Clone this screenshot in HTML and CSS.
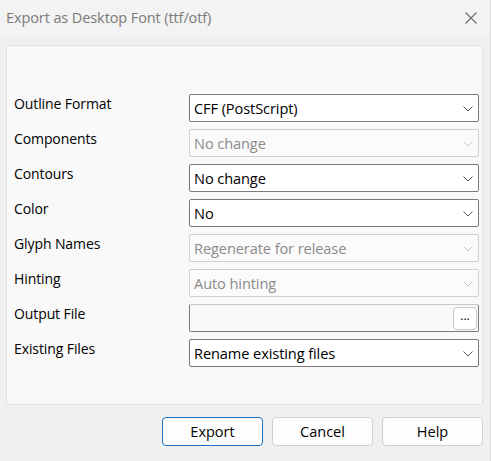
FILE: index.html
```html
<!DOCTYPE html>
<html lang="en">
<head>
    <meta charset="UTF-8">
    <title>Export as Desktop Font (ttf/otf)</title>
    <link rel="stylesheet" href="styles.css">
</head>
<body>
    <div class="window">
        <div class="titlebar">
            <span class="title">Export as Desktop Font (ttf/otf)</span>
            <svg class="close" width="12" height="12" viewBox="0 0 12 12">
                <path d="M0.5 0.5 L11.5 11.5 M11.5 0.5 L0.5 11.5" stroke="#6b6b6b" stroke-width="1.1" fill="none"/>
            </svg>
        </div>

        <div class="content">
            <div class="panel">
                <div class="row">
                    <div class="label">Outline Format</div>
                    <div class="select">CFF (PostScript)<svg class="chev" viewBox="0 0 10 6"><path d="M0.5 0.5 L5 5 L9.5 0.5"/></svg></div>
                </div>
                <div class="row">
                    <div class="label">Components</div>
                    <div class="select disabled">No change<svg class="chev" viewBox="0 0 10 6"><path d="M0.5 0.5 L5 5 L9.5 0.5"/></svg></div>
                </div>
                <div class="row">
                    <div class="label">Contours</div>
                    <div class="select">No change<svg class="chev" viewBox="0 0 10 6"><path d="M0.5 0.5 L5 5 L9.5 0.5"/></svg></div>
                </div>
                <div class="row">
                    <div class="label">Color</div>
                    <div class="select">No<svg class="chev" viewBox="0 0 10 6"><path d="M0.5 0.5 L5 5 L9.5 0.5"/></svg></div>
                </div>
                <div class="row">
                    <div class="label">Glyph Names</div>
                    <div class="select disabled">Regenerate for release<svg class="chev" viewBox="0 0 10 6"><path d="M0.5 0.5 L5 5 L9.5 0.5"/></svg></div>
                </div>
                <div class="row">
                    <div class="label">Hinting</div>
                    <div class="select disabled">Auto hinting<svg class="chev" viewBox="0 0 10 6"><path d="M0.5 0.5 L5 5 L9.5 0.5"/></svg></div>
                </div>
                <div class="row">
                    <div class="label">Output File</div>
                    <div class="file-input">
                        <span class="browse">...</span>
                    </div>
                </div>
                <div class="row">
                    <div class="label">Existing Files</div>
                    <div class="select">Rename existing files<svg class="chev" viewBox="0 0 10 6"><path d="M0.5 0.5 L5 5 L9.5 0.5"/></svg></div>
                </div>
            </div>
        </div>

        <div class="buttons">
            <button class="btn default">Export</button>
            <button class="btn">Cancel</button>
            <button class="btn">Help</button>
        </div>
    </div>
</body>
</html>
```

FILE: styles.css
```css
* {
    margin: 0;
    padding: 0;
    box-sizing: border-box;
    font-family: "Open Sans", "Noto Sans", sans-serif;
}

body {
    background-color: #f0f0f0;
    color: #000;
    width: 491px;
    height: 461px;
    overflow: hidden;
}

.window {
    width: 491px;
    height: 461px;
    border-right: 1px solid #dcdcdc;
}

.titlebar {
    height: 35px;
    background-color: #f3f3f3;
    display: flex;
    align-items: center;
    justify-content: space-between;
    padding: 0 13px 0 6px;
}

.title {
    font-size: 14.5px;
    color: #7a7a7a;
    letter-spacing: -0.1px;
}

.content {
    padding: 10px 7px 0 6px;
}

.panel {
    height: 360px;
    background-color: #f9f9f9;
    border: 1px solid #e2e2e2;
    padding: 48px 3px 0 7px;
    display: flex;
    flex-direction: column;
    gap: 7px;
}

.row {
    display: flex;
    align-items: flex-start;
    height: 28px;
}

.label {
    width: 175px;
    font-size: 14px;
    line-height: 18px;
    padding-top: 1px;
    letter-spacing: -0.1px;
}

.select {
    width: 290px;
    height: 28px;
    border: 1px solid #7a7a7a;
    border-radius: 2px;
    background-color: #fff;
    font-size: 14.6px;
    line-height: 26px;
    padding-left: 4px;
    position: relative;
    letter-spacing: -0.1px;
}

.select.disabled {
    border-color: #cfcfcf;
    color: #8a8a8a;
    background-color: #fbfbfb;
}

.chev {
    position: absolute;
    right: 5px;
    top: 11px;
    width: 10px;
    height: 6px;
    fill: none;
    stroke: #555;
    stroke-width: 1;
}

.select.disabled .chev {
    stroke: #c4c4c4;
}

.file-input {
    width: 290px;
    height: 28px;
    border: 1px solid #7a7a7a;
    border-top-color: #c8c8c8;
    border-radius: 2px;
    background-color: #f9f9f9;
    display: flex;
    justify-content: flex-end;
    align-items: flex-end;
    padding: 0 1px 1px 0;
}

.browse {
    width: 24px;
    height: 23px;
    border: 1px solid #c9c9c9;
    border-radius: 4px;
    background-color: #fff;
    font-size: 12px;
    line-height: 16px;
    text-align: center;
}

.buttons {
    display: flex;
    justify-content: flex-end;
    gap: 9px;
    padding: 12px 7px 0 0;
}

.btn {
    width: 101px;
    height: 29px;
    border: 1px solid #d0d0d0;
    border-radius: 4px;
    background-color: #fdfdfd;
    font-size: 14.5px;
    color: #000;
}

.btn.default {
    border-color: #1a6fc4;
}
```
